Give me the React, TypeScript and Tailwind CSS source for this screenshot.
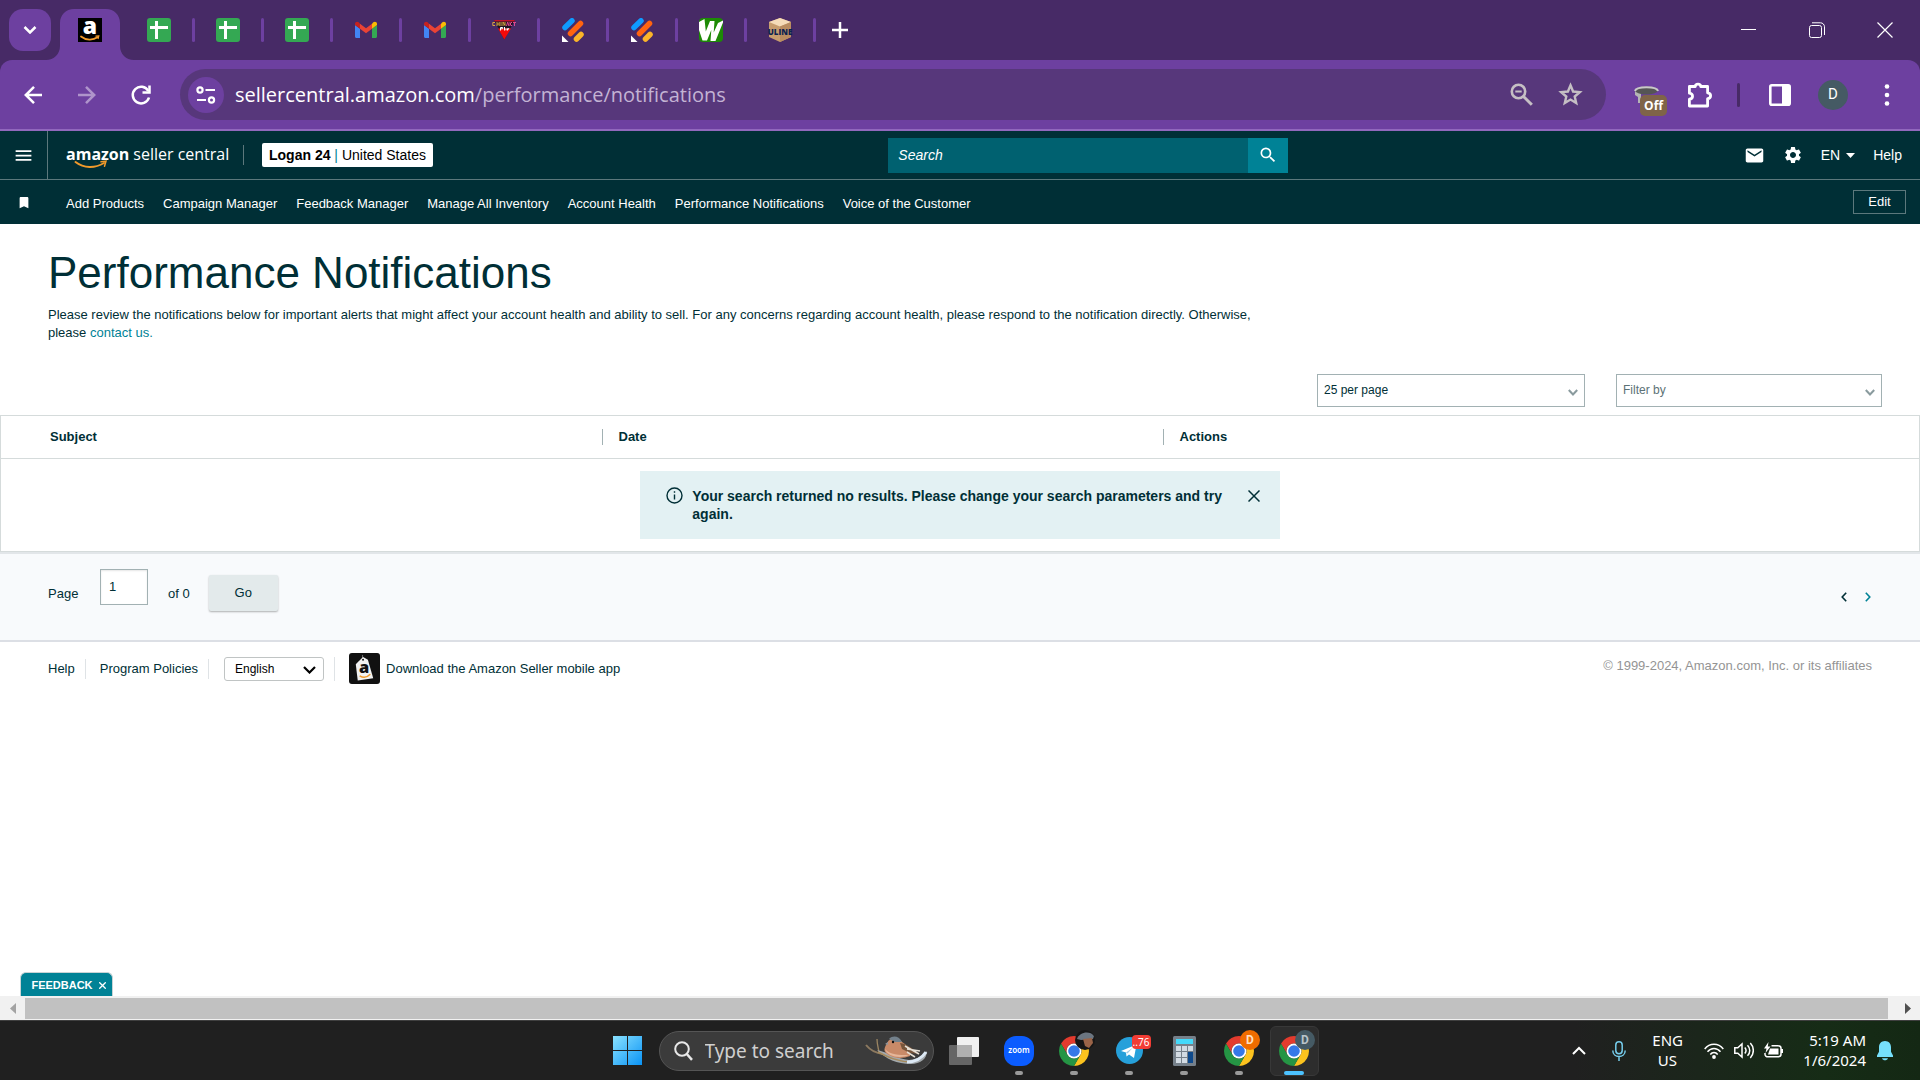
import { useState, type ReactNode } from 'react'
import { MdBookmark, MdEmail, MdMenu, MdSearch, MdSettings } from 'react-icons/md'

const QUICK_LINKS = [
  'Add Products',
  'Campaign Manager',
  'Feedback Manager',
  'Manage All Inventory',
  'Account Health',
  'Performance Notifications',
  'Voice of the Customer',
]

/* ---------- favicons ---------- */

function AmazonFavicon() {
  return (
    <svg className="overflow-visible" width="24" height="24" viewBox="0 0 24 24">
      <rect width="24" height="24" fill="#000" />
      <text x="12" y="16" textAnchor="middle" fontFamily="Open Sans, sans-serif" fontWeight="800" fontSize="23" fill="#fff">a</text>
      <path d="M3 18.5c5 4 12 4 16.500.8" fill="none" stroke="#f19a2b" strokeWidth="1.800" strokeLinecap="round" />
      <path d="M17.500 18.200l3.300-.2-.8 3" fill="none" stroke="#f19a2b" strokeWidth="1.200" />
    </svg>
  )
}

function SheetsFavicon() {
  return (
    <svg width="24" height="24" viewBox="0 0 24 24">
      <rect width="24" height="24" rx="3" fill="#34a853" />
      <path d="M3 9.500h18M9.500 3v18" stroke="#fff" strokeWidth="3" />
    </svg>
  )
}

function GmailFavicon() {
  return (
    <svg width="24" height="24" viewBox="0 0 24 24">
      <path d="M1 7v11.500c0 .9.6 1.500 1.500 1.500H6V10.800z" fill="#4285f4" />
      <path d="M18 20h3.500c.9 0 1.500-.6 1.500-1.500V7l-5 3.800z" fill="#34a853" />
      <path d="M18 5.800v5l5-3.800V6c0-2-2.100-2.900-3.700-1.700z" fill="#fbbc04" />
      <path d="M6 10.800v-5l6 4.500 6-4.500v5l-6 4.500z" fill="#ea4335" />
      <path d="M1 6v1l5 3.800v-5L4.700 4.300C3.100 3.100 1 4 1 6z" fill="#c5221f" />
    </svg>
  )
}

function TriangleFavicon() {
  return (
    <svg width="24" height="24" viewBox="0 0 24 24">
      <path d="M2 2h21L12.300 21.500z" fill="#1d1320" />
      <path d="M6 10.500h13l-6.700 11z" fill="#f50a0a" />
      <path d="M2 2h21l-.8 1.500H2.800z" fill="#c0142c" />
      <path d="M3 4.500H.8v3H3M5 4v4m0-2h2.200M7.200 4v4M9 4v4M11 8V4l2 3.500V4" fill="none" stroke="#d9a441" strokeWidth="1" />
      <path d="M14.500 8l1.200-4 1.200 4M18 4v4m0-2l2-2m-2 2l2 2M21 4.500h3M22.500 4.500V8" fill="none" stroke="#e0488f" strokeWidth="1" />
      <path d="M8.500 12.500V9.500h2.200v1.300H8.500M12.500 9v3.500m1.500-2.200v2m1.500-2v2l1.500-2.300" fill="none" stroke="#fff" strokeWidth="1" />
    </svg>
  )
}

function StripesFavicon() {
  return (
    <svg width="24" height="24" viewBox="0 0 24 24">
      <g strokeWidth="5.500" strokeLinecap="round">
        <path d="M4 9.500L11 2.800" stroke="#0f9bff" />
        <path d="M9.500 15.500L19.500 5.500" stroke="#ff6410" />
        <path d="M15.500 21L20 16.500" stroke="#fbb429" />
      </g>
      <path d="M1 17.500l6.500 6.500H1z" fill="#fff" />
    </svg>
  )
}

function WFavicon() {
  return (
    <svg width="24" height="24" viewBox="0 0 24 24">
      <rect width="24" height="24" rx="4" fill="#1d8a06" />
      <path d="M0 4l5.500-3 1.300 12.500L11 3h4.500l-.8 11.500L19 5l5-2.500v2L16.500 23h-5l.8-11L8 22.500H3.500L0 12z" fill="#fff" />
    </svg>
  )
}

function UlineFavicon() {
  return (
    <svg className="overflow-visible" width="24" height="24" viewBox="0 0 24 24">
      <path d="M12 0l11 4v15l-11 5-11-5V4z" fill="#c79d6e" />
      <path d="M12 0l11 4-11 4.500L1 4z" fill="#f5dcb8" />
      <path d="M12 8.500L23 4v15l-11 5z" fill="#b98d60" />
      <text x="12" y="16.500" textAnchor="middle" fontFamily="Open Sans, sans-serif" fontWeight="800" fontSize="8" fill="#0c2250">ULINE</text>
    </svg>
  )
}

const TABS: { name: string; icon: ReactNode }[] = [
  { name: 'Spreadsheet 1', icon: <SheetsFavicon /> },
  { name: 'Spreadsheet 2', icon: <SheetsFavicon /> },
  { name: 'Spreadsheet 3', icon: <SheetsFavicon /> },
  { name: 'Mail 1', icon: <GmailFavicon /> },
  { name: 'Mail 2', icon: <GmailFavicon /> },
  { name: 'Shop', icon: <TriangleFavicon /> },
  { name: 'Tool 1', icon: <StripesFavicon /> },
  { name: 'Tool 2', icon: <StripesFavicon /> },
  { name: 'Wholesale', icon: <WFavicon /> },
  { name: 'Uline', icon: <UlineFavicon /> },
]

/* ---------- browser window ---------- */

function TabStrip() {
  return (
    <div className="flex h-[60px] items-center bg-[#472a66] pl-[9px] text-white">
      <button aria-label="Search tabs" className="flex h-[42px] w-[42px] items-center justify-center rounded-[14px] bg-[#6d40a0]">
        <svg width="14" height="8" viewBox="0 0 14 8" fill="none" stroke="currentColor" strokeWidth="2.500">
          <path d="M1.500 1l5.500 5.500L12.500 1" />
        </svg>
      </button>
      <div className="relative ml-[9px] flex w-[60px] items-center justify-center self-stretch pt-[9px]">
        <svg className="absolute -left-[14px] bottom-0" width="88" height="51" viewBox="0 0 88 51" fill="#6d40a0">
          <path d="M0 51c8 0 14-6 14-14V14C14 6 20 0 28 0h32c8 0 14 6 14 14v23c0 8 6 14 14 14z" />
        </svg>
        <button aria-label="Performance Notifications" className="relative mb-[9px]">
          <AmazonFavicon />
        </button>
      </div>
      <div className="ml-[6px] flex items-center">
        {TABS.map((t) => (
          <div key={t.name} className="flex w-[69px] items-center justify-between pl-[21px]">
            <button aria-label={t.name}>{t.icon}</button>
            <span className="h-6 w-[3px] rounded-full bg-[#6d40a0]" />
          </div>
        ))}
      </div>
      <button aria-label="New tab" className="ml-4">
        <svg width="16" height="16" viewBox="0 0 16 16" stroke="currentColor" strokeWidth="2.500">
          <path d="M8 0v16M0 8h16" />
        </svg>
      </button>
      <div className="ml-auto flex items-center gap-[52px] pr-[27px]">
        <button aria-label="Minimize">
          <svg width="16" height="16" viewBox="0 0 16 16" stroke="currentColor"><path d="M0 7.500h15" /></svg>
        </button>
        <button aria-label="Restore">
          <svg width="16" height="16" viewBox="0 0 16 16" fill="none" stroke="currentColor">
            <rect x=".5" y="3.500" width="12" height="12" rx="2" />
            <path d="M3 .8h8.500c2.200 0 4 1.800 4 4V13" />
          </svg>
        </button>
        <button aria-label="Close">
          <svg width="16" height="16" viewBox="0 0 16 16" stroke="currentColor" strokeWidth="1.200"><path d="M.5.5l15 15M15.500.5l-15 15" /></svg>
        </button>
      </div>
    </div>
  )
}

function Toolbar() {
  return (
    <div className="bg-[#472a66]">
      <div className="flex h-[71px] items-center rounded-t-xl border-b-2 border-[#9168bd] bg-[#6d40a0] pl-5 pr-[30px] text-white">
        <div className="flex items-center gap-7">
          <button aria-label="Back">
            <svg width="26" height="26" viewBox="0 0 26 26" fill="none" stroke="currentColor" strokeWidth="2.500">
              <path d="M22 13H6M14 4.800L5.800 13l8.200 8.200" />
            </svg>
          </button>
          <button aria-label="Forward" className="text-[#af94cb]">
            <svg width="26" height="26" viewBox="0 0 26 26" fill="none" stroke="currentColor" strokeWidth="2.500">
              <path d="M4 13h16M12 4.800l8.200 8.200-8.200 8.200" />
            </svg>
          </button>
          <button aria-label="Reload">
            <svg width="26" height="26" viewBox="0 0 26 26" fill="none" stroke="currentColor" strokeWidth="2.500">
              <path d="M21 15.500A8.300 8.300 0 1 1 20.300 9" />
              <path d="M21.500 3.500v7h-7" />
            </svg>
          </button>
        </div>
        <div className="ml-[26px] flex h-[51px] flex-1 items-center rounded-full bg-[#57377b] pl-2 pr-[21px]">
          <button aria-label="Site information" className="flex h-9 w-9 items-center justify-center rounded-full bg-[#6d40a0]">
            <svg width="20" height="18" viewBox="0 0 20 18" fill="none" stroke="currentColor" strokeWidth="2.200">
              <circle cx="4" cy="4" r="2.600" />
              <path d="M9.500 4H19M1 14h9" />
              <circle cx="15.500" cy="14" r="2.600" />
            </svg>
          </button>
          <div className="ml-[11px] font-['Open_Sans',sans-serif] text-[20px] leading-7">
            sellercentral.amazon.com<span className="text-[#c3b3d4]">/performance/notifications</span>
          </div>
          <div className="ml-auto flex items-center gap-5 text-[#c5bfc4]">
            <button aria-label="Zoom">
              <svg width="29" height="29" viewBox="0 0 29 29" fill="none" stroke="currentColor" strokeWidth="2.600">
                <circle cx="11.500" cy="11.500" r="6.700" />
                <path d="M16.500 16.500l8.300 8.300" strokeWidth="3" />
                <path d="M8.300 11.500h6.400" strokeWidth="2" />
              </svg>
            </button>
            <button aria-label="Bookmark this tab">
              <svg width="29" height="29" viewBox="0 0 29 29" fill="none" stroke="currentColor" strokeWidth="2.400">
                <path d="M14.500 5.300l2.600 6.200 6.700.6-5.100 4.400 1.500 6.600-5.700-3.500-5.700 3.500 1.500-6.600-5.100-4.400 6.700-.6z" />
              </svg>
            </button>
          </div>
        </div>
        <div className="ml-7 flex items-center">
          <button aria-label="Extension" className="relative h-7 w-[33px]">
            <svg width="26" height="22" viewBox="0 0 26 22" fill="none">
              <path d="M1 6v5l3 2v6h3V9z" fill="#b5b5b5" />
              <ellipse cx="12.500" cy="6.500" rx="11.500" ry="4" fill="#555" />
              <path d="M1 7c1-5 22-5 23 0" stroke="#c9c9c9" strokeWidth="2" />
            </svg>
            <span className="absolute -bottom-[7px] left-[6px] h-[21px] w-[27px] rounded-[5px] bg-[#7f6448] font-['Open_Sans',sans-serif] text-[12px] font-bold leading-[21px]">Off</span>
          </button>
          <button aria-label="Extensions" className="ml-5">
            <svg width="26" height="26" viewBox="0 0 26 26" fill="none" stroke="currentColor" strokeWidth="2.800" strokeLinejoin="round">
              <path d="M2.400 4.500h5.800c.3-3.200 5.300-3.200 5.600 0h6.800v6.300c4 .3 4 5.600 0 5.900v7.300H2.400v-6.800c4.200-.6 4.200-5.400 0-6z" />
            </svg>
          </button>
          <span className="ml-6 h-6 w-[3px] rounded bg-[#472a66]" />
          <button aria-label="Side panel" className="ml-[29px]">
            <svg width="22" height="22" viewBox="0 0 22 22">
              <rect x="1.300" y="1.300" width="19.400" height="19.400" rx="1.500" fill="none" stroke="currentColor" strokeWidth="2.600" />
              <path d="M13 1h8v20h-8z" fill="currentColor" />
            </svg>
          </button>
          <button aria-label="Profile" className="ml-[27px] flex h-[30px] w-[30px] items-center justify-center rounded-full bg-[#455a64] font-['Roboto',sans-serif] text-[15px]">D</button>
          <button aria-label="Menu" className="ml-9">
            <svg width="6" height="22" viewBox="0 0 6 22" fill="currentColor">
              <circle cx="3" cy="2.500" r="2.300" /><circle cx="3" cy="11" r="2.300" /><circle cx="3" cy="19.500" r="2.300" />
            </svg>
          </button>
        </div>
      </div>
    </div>
  )
}

/* ---------- seller central ---------- */

function SellerLogo() {
  return (
    <a href="#home" className="relative flex gap-1 whitespace-nowrap pb-[3px] font-['Open_Sans',sans-serif] text-[16px] leading-6 text-white">
      <span className="font-bold">amazon</span>
      <span>seller central</span>
      <svg className="absolute left-2 top-[18px]" width="34" height="10" viewBox="0 0 34 10" fill="none" stroke="#f19a2b" strokeLinecap="round">
        <path d="M1.500 2C10 8.500 21 8.500 30 3" strokeWidth="2" />
        <path d="M27 1.800l5-.6-1.500 5" strokeWidth="1.500" />
      </svg>
    </a>
  )
}

function Header() {
  return (
    <header className="bg-[#002f36] text-white">
      <div className="flex h-[49px] items-center justify-between border-b border-[#5c787c] pr-[18px]">
        <div className="flex items-center self-stretch">
          <button aria-label="Navigation menu" className="flex w-12 items-center justify-center self-stretch border-r border-[#5c787c]">
            <MdMenu size={21} />
          </button>
          <div className="ml-[18px] w-[160px]"><SellerLogo /></div>
          <span className="ml-[17px] h-5 w-px bg-[#5c787c]" />
          <button className="ml-[18px] h-6 rounded-[2px] bg-white px-[7px] text-[14px] leading-6 text-black">
            <b>Logan 24</b> <span className="text-[#008296]">|</span> United States
          </button>
        </div>
        <form className="flex h-[35px] w-[400px]" onSubmit={(e) => e.preventDefault()}>
          <input
            aria-label="Search"
            placeholder="Search"
            className="min-w-0 flex-1 bg-[#006170] px-[10px] text-[14px] italic text-white outline-none placeholder:text-white"
          />
          <button aria-label="Submit search" className="flex w-10 items-center justify-center bg-[#008296]">
            <MdSearch size={20} />
          </button>
        </form>
        <div className="flex items-center text-[14px]">
          <button aria-label="Messages"><MdEmail size={21} /></button>
          <button aria-label="Settings" className="ml-[18px]"><MdSettings size={20} /></button>
          <button className="ml-[18px] flex items-center gap-[6px]">
            EN
            <svg width="9" height="5" viewBox="0 0 9 5" fill="currentColor"><path d="M0 0h9L4.500 5z" /></svg>
          </button>
          <a href="#help" className="ml-[18px]">Help</a>
        </div>
      </div>
      <nav className="flex h-11 items-center pl-[13px] pr-[14px]">
        <button aria-label="Bookmarks"><MdBookmark size={15} className="w-[22px]" /></button>
        <div className="ml-[31px] flex gap-[19px] pt-[3px] text-[13px]">
          {QUICK_LINKS.map((l) => (
            <a key={l} href="#page">{l}</a>
          ))}
        </div>
        <button className="ml-auto h-6 w-[53px] border border-[#5c787c] text-[13px]">Edit</button>
      </nav>
    </header>
  )
}

function Chevron({ className }: { className: string }) {
  return (
    <svg className={`pointer-events-none absolute ${className}`} width="10" height="7" viewBox="0 0 10 7" fill="none" stroke="currentColor" strokeWidth="2">
      <path d="M.8 1L5 5.500 9.200 1" />
    </svg>
  )
}

function Filters() {
  return (
    <div className="mt-8 flex justify-end gap-[31px] pr-[38px] text-[12px]">
      <div className="relative w-[268px] text-[#8a9b9e]">
        <select aria-label="Results per page" className="h-[33px] w-full appearance-none border border-[#a2b1b3] bg-white px-[6px] pb-[2px] text-[#002f36]">
          <option>25 per page</option>
          <option>50 per page</option>
        </select>
        <Chevron className="right-[7px] top-[15px]" />
      </div>
      <div className="relative w-[266px] text-[#8a9b9e]">
        <select aria-label="Filter by" className="h-[33px] w-full appearance-none border border-[#a2b1b3] bg-white px-[6px] pb-[2px] text-[#5c7276]">
          <option>Filter by</option>
        </select>
        <Chevron className="right-[7px] top-[15px]" />
      </div>
    </div>
  )
}

function ResultsTable() {
  const [dismissed, setDismissed] = useState(false)

  return (
    <table className="mt-2 w-full table-fixed border-collapse border border-[#d5dbdb] text-[13px]">
      <thead>
        <tr className="h-[43px] border-b border-[#d5dbdb] text-left">
          <th className="w-[601px] pl-[49px]">Subject</th>
          <th className="w-[561px]"><div className="border-l border-[#a2b1b3] pl-4 leading-4">Date</div></th>
          <th><div className="border-l border-[#a2b1b3] pl-4 leading-4">Actions</div></th>
        </tr>
      </thead>
      <tbody>
        <tr>
          <td colSpan={3} className="h-[93px] p-0">
            {!dismissed && (
              <div role="alert" className="mx-auto flex h-[68px] w-1/3 items-start bg-[#e3f1f3] pl-[26px] pr-5 pt-4 text-[14px] font-bold leading-[18px]">
                <svg className="shrink-0" width="17" height="17" viewBox="0 0 17 17" fill="none" stroke="currentColor" strokeWidth="1.400">
                  <circle cx="8.500" cy="8.500" r="7.500" />
                  <path d="M8.500 7.500v5M8.500 4.200v1.600" />
                </svg>
                <p className="ml-[9px] flex-1">Your search returned no results. Please change your search parameters and try again.</p>
                <button aria-label="Dismiss" className="mt-[3px] shrink-0" onClick={() => setDismissed(true)}>
                  <svg width="12" height="12" viewBox="0 0 12 12" stroke="currentColor" strokeWidth="1.500"><path d="M.5.5l11 11M11.500.5l-11 11" /></svg>
                </button>
              </div>
            )}
          </td>
        </tr>
      </tbody>
    </table>
  )
}

function Pagination() {
  const [page, setPage] = useState('1')

  return (
    <div className="flex h-[90px] items-start border-y-2 border-t-[#e2e6e9] border-b-[#dcdfe5] bg-[#f8fafc] px-12 pt-[15px] text-[13px]">
      <label htmlFor="page-number" className="mt-[15px] w-[52px] leading-5">Page</label>
      <input
        id="page-number"
        value={page}
        onChange={(e) => setPage(e.target.value)}
        className="h-9 w-12 border border-[#a2b1b3] bg-white px-2 pb-[2px] shadow-[inset_0_1px_2px_rgba(0,0,0,0.1)] outline-none"
      />
      <span className="ml-5 mt-[15px] leading-5">of 0</span>
      <button className="ml-[19px] mt-[6px] h-9 w-[69px] rounded-[2px] bg-[#e3eaeb] shadow-[0_1px_2px_rgba(0,0,0,0.3)]">Go</button>
      <div className="ml-auto mt-[23px] flex gap-[18px] pr-px">
        <button aria-label="Previous page">
          <svg width="6" height="10" viewBox="0 0 6 10" fill="none" stroke="currentColor" strokeWidth="1.600"><path d="M5.200.8L1.200 5l4 4.200" /></svg>
        </button>
        <button aria-label="Next page" className="text-[#008296]">
          <svg width="6" height="10" viewBox="0 0 6 10" fill="none" stroke="currentColor" strokeWidth="1.600"><path d="M.8.8l4 4.200-4 4.200" /></svg>
        </button>
      </div>
    </div>
  )
}

function Footer() {
  return (
    <footer className="flex items-center px-12 pt-[11px] text-[13px]">
      <a href="#help">Help</a>
      <span className="ml-[10px] h-5 w-px bg-[#dfe3e6]" />
      <a href="#policies" className="ml-[14px]">Program Policies</a>
      <span className="ml-[10px] h-5 w-px bg-[#dfe3e6]" />
      <div className="relative ml-[15px] text-black">
        <select aria-label="Language" className="h-6 w-[100px] appearance-none rounded-[3px] border border-[#c0c4c4] bg-white px-[10px] text-[12px]">
          <option>English</option>
        </select>
        <svg className="pointer-events-none absolute right-2 top-[9px]" width="13" height="8" viewBox="0 0 13 8" fill="none" stroke="currentColor" strokeWidth="2.200">
          <path d="M1 1l5.500 5.500L12 1" />
        </svg>
      </div>
      <span className="ml-[10px] h-6 w-px bg-[#dfe3e6]" />
      <a href="#app" className="ml-[14px] flex items-center gap-[6px]">
        <svg width="31" height="31" viewBox="0 0 32 32">
          <rect width="32" height="32" rx="3" fill="#111" />
          <path d="M14 2v5" stroke="#777" />
          <path d="M10 8.500L14.500 4l5 3 5.500 19-16 2.500-2-17z" fill="#f2f2f2" />
          <circle cx="14.500" cy="7" r="1" fill="#111" />
          <text x="15.500" y="21" textAnchor="middle" fontFamily="Open Sans, sans-serif" fontWeight="800" fontSize="17" fill="#111">a</text>
          <path d="M11 23.500c4 2.500 8 1.500 11-1.500" fill="none" stroke="#f19a2b" strokeWidth="1.500" />
        </svg>
        Download the Amazon Seller mobile app
      </a>
      <span className="mb-[6px] ml-auto text-[#949494]">© 1999-2024, Amazon.com, Inc. or its affiliates</span>
    </footer>
  )
}

function Scrollbar() {
  return (
    <div className="flex h-6 items-center bg-[#f1f1f1]">
      <button aria-label="Scroll left" className="flex w-[25px] justify-center">
        <svg width="6" height="11" viewBox="0 0 6 11" fill="#a3a3a3"><path d="M6 0v11L0 5.500z" /></svg>
      </button>
      <div className="h-[21px] flex-1 bg-[#c1c1c1]" />
      <button aria-label="Scroll right" className="flex w-8 justify-center pl-2">
        <svg width="6" height="11" viewBox="0 0 6 11" fill="#505050"><path d="M0 0v11l6-5.500z" /></svg>
      </button>
    </div>
  )
}

/* ---------- taskbar ---------- */

function ChromeLogo() {
  return (
    <svg width="30" height="30" viewBox="0 0 48 48">
      <path d="M3.220 12A24 24 0 0 1 44.780 12H24A12 12 0 0 0 13.600 30z" fill="#e33b2e" />
      <path d="M44.780 12A24 24 0 0 1 24 48l10.400-18A12 12 0 0 0 24 12z" fill="#fcc31e" />
      <path d="M24 48A24 24 0 0 1 3.220 12L13.600 30a12 12 0 0 0 20.800 0z" fill="#259544" />
      <circle cx="24" cy="24" r="12" fill="#fff" />
      <circle cx="24" cy="24" r="9.300" fill="#3578e8" />
    </svg>
  )
}

function Bird() {
  return (
    <svg width="64" height="30" viewBox="0 0 64 30" fill="none">
      <path d="M1 9c4 5 9 8 17 9" stroke="#8d7a60" strokeWidth="2" />
      <path d="M14 16c-1-5-2-8-2-13" stroke="#9b8562" strokeWidth="1.300" />
      <path d="M12 14c10 2 20 9 32 10 9-1 15-5 18-9 0 8-7 13-16 13-14 0-25-5-34-14z" fill="#a3a9ad" />
      <path d="M13 16c10 5 20 10 34 10" stroke="#a58a5c" strokeWidth="1.500" />
      <path d="M42 26c9 0 15-4 19-10" stroke="#dce9f5" strokeWidth="3" />
      <path d="M22 7c3-6 11-7 15-1 5 3 9 8 8 14-7 3-18 3-24-3-3-3-1-6 1-10z" fill="#c98a68" />
      <path d="M24 3c4-4 10-3 13 3l-7 0z" fill="#73818c" />
      <path d="M35 7c8 1 12 6 20 11l-10-1-8-4z" fill="#77563c" />
      <path d="M40 10l14 8M42 13l13 2M42 16l8 5" stroke="#e6e0d6" strokeWidth="1.500" />
      <path d="M20 13c5 6 14 6 24 6-8 4-22 2-24-6z" fill="#e5b699" />
      <path d="M23 6l-3 2 3 1z" fill="#8f959b" />
      <circle cx="28" cy="6" r="1.200" fill="#111" />
    </svg>
  )
}

function TaskItem({ name, active, running = true, children }: { name: string; active?: boolean; running?: boolean; children: ReactNode }) {
  return (
    <button
      aria-label={name}
      className={`relative flex h-[50px] w-[49px] shrink-0 items-center justify-center rounded-md border ${
        active ? 'border-[#383838] bg-[#2d2d2d]' : 'border-transparent'
      }`}
    >
      {children}
      {running && (
        <span className={`absolute bottom-0 h-1 rounded-full ${active ? 'w-5 bg-[#4cc2ff]' : 'w-2 bg-[#9a9a9a]'}`} />
      )}
    </button>
  )
}

function Badge({ className, children }: { className: string; children?: ReactNode }) {
  return (
    <span className={`absolute -top-[6px] left-4 flex h-5 w-5 items-center justify-center rounded-full font-['Roboto',sans-serif] text-[12px] font-bold ${className}`}>
      {children}
    </span>
  )
}

function Taskbar() {
  return (
    <div className="grid h-[60px] grid-cols-[1fr_auto_1fr] items-center border-t border-[#3f3f3f] bg-[linear-gradient(90deg,#202020_82%,#162c16_95%,#142814)] font-['Noto_Sans',sans-serif] text-white">
      <div />
      <div className="flex items-center gap-[6px] pl-[3px]">
        <button aria-label="Start" className="flex w-12 justify-center pr-[2px]">
          <svg width="29" height="29" viewBox="0 0 29 29">
            <defs>
              <linearGradient id="win" x1="0" y1="0" x2="1" y2="1">
                <stop offset="0" stopColor="#8ae2ff" />
                <stop offset="1" stopColor="#0a93f5" />
              </linearGradient>
            </defs>
            <path d="M0 0h14v14H0zM15 0h14v14H15zM0 15h14v14H0zM15 15h14v14H15z" fill="url(#win)" />
          </svg>
        </button>
        <label className="flex h-10 w-[275px] items-center rounded-full border border-[#555] bg-[#3b3b3b] pl-[14px] pr-1">
          <svg className="shrink-0" width="19" height="20" viewBox="0 0 19 20" fill="none" stroke="#e8e8e8" strokeWidth="2">
            <circle cx="8" cy="8" r="6.800" />
            <path d="M12.800 13l5.200 5.800" strokeWidth="2.500" />
          </svg>
          <input aria-label="Type to search" placeholder="Type to search" className="ml-3 min-w-0 flex-1 bg-transparent pt-[2px] text-[19px] outline-none placeholder:text-[#cfcfcf]" />
          <Bird />
        </label>
        <TaskItem name="Task view" running={false}>
          <svg width="30" height="28" viewBox="0 0 30 28">
            <rect x="8" width="22" height="20" rx="1" fill="#f0f0f0" />
            <rect y="8" width="23" height="20" rx="1" fill="#666" />
            <rect x="8" y="8" width="15" height="12" fill="#b0b0b0" />
          </svg>
        </TaskItem>
        <TaskItem name="Zoom">
          <span className="flex h-[30px] w-[30px] items-center justify-center rounded-[12px] bg-[#0b5cff] pb-0.5 text-[8px] font-semibold">zoom</span>
        </TaskItem>
        <TaskItem name="Chrome">
          <span className="relative">
            <ChromeLogo />
            <Badge className="overflow-hidden bg-[#161616]">
              <svg width="20" height="20" viewBox="0 0 20 20">
                <path d="M2 9c2-7 13-9 17-3l-1 3-12 1z" fill="#6b7580" />
                <path d="M8 9l9-1 1 5-4 5-4-2z" fill="#9a6448" />
              </svg>
            </Badge>
          </span>
        </TaskItem>
        <TaskItem name="Telegram">
          <span className="relative">
            <svg width="27" height="27" viewBox="0 0 27 27">
              <circle cx="13.500" cy="13.500" r="13.500" fill="#26a0da" />
              <path d="M5 14l15.500-6.500L18 21l-5-3.500-2.500 2-.5-4z" fill="#fff" />
              <path d="M10 15.500l7-5-5.500 6z" fill="#9fc9e3" />
            </svg>
            <span className="absolute -top-0.5 left-4 h-[14px] w-[19px] rounded-[4px] bg-[#f23c34] text-[10px] leading-[14px]">..76</span>
          </span>
        </TaskItem>
        <TaskItem name="Calculator">
          <svg width="23" height="30" viewBox="0 0 23 30">
            <rect width="23" height="30" rx="1.500" fill="#76808a" />
            <path d="M3 3h17v5H3z" fill="#44d9fa" />
            <path d="M3 10h5v5H3zM9 10h5v5H9zM15 10h5v5h-5zM3 16h5v5H3zM9 16h5v5H9zM3 22h5v5H3zM9 22h5v5H9z" fill="#d3dbe3" />
            <path d="M15 16h5v11h-5z" fill="#0f4a8c" />
          </svg>
        </TaskItem>
        <TaskItem name="Chrome, second profile">
          <span className="relative">
            <ChromeLogo />
            <Badge className="bg-[#ef6c00] text-[#ffdfc2]">D</Badge>
          </span>
        </TaskItem>
        <TaskItem name="Chrome, current window" active>
          <span className="relative">
            <ChromeLogo />
            <Badge className="bg-[#455a64] text-[#b9c5ca]">D</Badge>
          </span>
        </TaskItem>
      </div>
      <div className="flex items-center justify-end pr-[27px] text-[15px] leading-5">
        <button aria-label="Show hidden icons">
          <svg width="14" height="9" viewBox="0 0 14 9" fill="none" stroke="currentColor" strokeWidth="2"><path d="M1 8l6-6 6 6" /></svg>
        </button>
        <button aria-label="Microphone" className="ml-[26px] text-[#76cdec]">
          <svg width="14" height="20" viewBox="0 0 14 20" fill="none" stroke="currentColor" strokeWidth="1.500">
            <rect x="3.800" y=".8" width="6.400" height="12" rx="3.200" />
            <path d="M.8 9.500c0 8 12.400 8 12.400 0M7 15.500V20" />
          </svg>
        </button>
        <button className="ml-[26px] w-[30px] pb-[2px] text-center">ENG US</button>
        <button aria-label="Network, volume and battery" className="ml-[22px] flex items-center gap-[10px]">
          <svg width="20" height="16" viewBox="0 0 20 16" fill="none" stroke="currentColor" strokeWidth="1.500">
            <path d="M.7 6c5-6.200 13.600-6.200 18.600 0M3.500 8.800c3.600-4.400 9.400-4.400 13 0M6.300 11.500c2-2.600 5.400-2.600 7.400 0" />
            <circle cx="10" cy="14" r="1.900" fill="currentColor" stroke="none" />
          </svg>
          <svg width="20" height="17" viewBox="0 0 20 17" fill="none" stroke="currentColor" strokeWidth="1.500">
            <path d="M.8 5.800h3L8 2v13l-4.200-3.800h-3z" />
            <path d="M10.800 5.500c1.500 1.800 1.500 4.200 0 6M13.500 3.200c3 3 3 7.600 0 10.600M16.300 1c4 4.200 4 10.800 0 15" />
          </svg>
          <svg width="20" height="17" viewBox="0 0 20 17" fill="none" stroke="currentColor" strokeWidth="1.500">
            <path d="M7.500 3.800H14c1.800 0 3 1 3 2.500v6c0 1.500-1.200 2.500-3 2.500H4c-1.800 0-3-1-3-2.500V11" />
            <path d="M6 6.500h8.500v6H4z" fill="currentColor" stroke="none" />
            <path d="M17 7h2v4h-2z" fill="currentColor" stroke="none" />
            <path d="M4.500 0L0 6.500h2.500L1.500 11 6.500 4.500H3.800z" fill="currentColor" stroke="none" />
          </svg>
        </button>
        <button className="ml-[19px] whitespace-pre-line pb-[2px] text-right">{'5:19 AM\n1/6/2024'}</button>
        <button aria-label="Notifications" className="ml-[11px] text-[#76e0fb]">
          <svg width="16" height="20" viewBox="0 0 16 20" fill="currentColor">
            <path d="M8 0C4.200 0 2 2.800 2 6.200v4.600L0 14.500V16h16v-1.500l-2-3.700V6.200C14 2.800 11.800 0 8 0zM5 17.200C6 20 10 20 11 17.200z" />
          </svg>
        </button>
      </div>
    </div>
  )
}

export default function App() {
  return (
    <div className="flex min-h-screen flex-col bg-white font-['Liberation_Sans',Arial,sans-serif] text-[#002f36]">
      <TabStrip />
      <Toolbar />
      <Header />
      <main>
        <div className="px-12 pt-6">
          <h1 className="text-[44px] leading-[50px]">Performance Notifications</h1>
          <p className="mt-2 max-w-[1220px] text-[13px] leading-[18px]">
            Please review the notifications below for important alerts that might affect your account health and ability to sell. For any concerns regarding account health, please respond to the notification directly. Otherwise, please <a href="#contact" className="text-[#008296]">contact us.</a>
          </p>
        </div>
        <Filters />
        <ResultsTable />
        <Pagination />
      </main>
      <Footer />
      <div className="mt-auto pl-5">
        <button className="flex h-6 w-[93px] items-center justify-center gap-[6px] rounded-t-md border border-b-0 border-[#c9d3d5] bg-[#008296] pl-1 pt-px text-[11px] font-bold text-white">
          FEEDBACK
          <svg width="7" height="7" viewBox="0 0 7 7" stroke="currentColor" strokeWidth="1.300"><path d="M.3.3l6.400 6.400M6.700.3L.3 6.700" /></svg>
        </button>
      </div>
      <Scrollbar />
      <Taskbar />
    </div>
  )
}
